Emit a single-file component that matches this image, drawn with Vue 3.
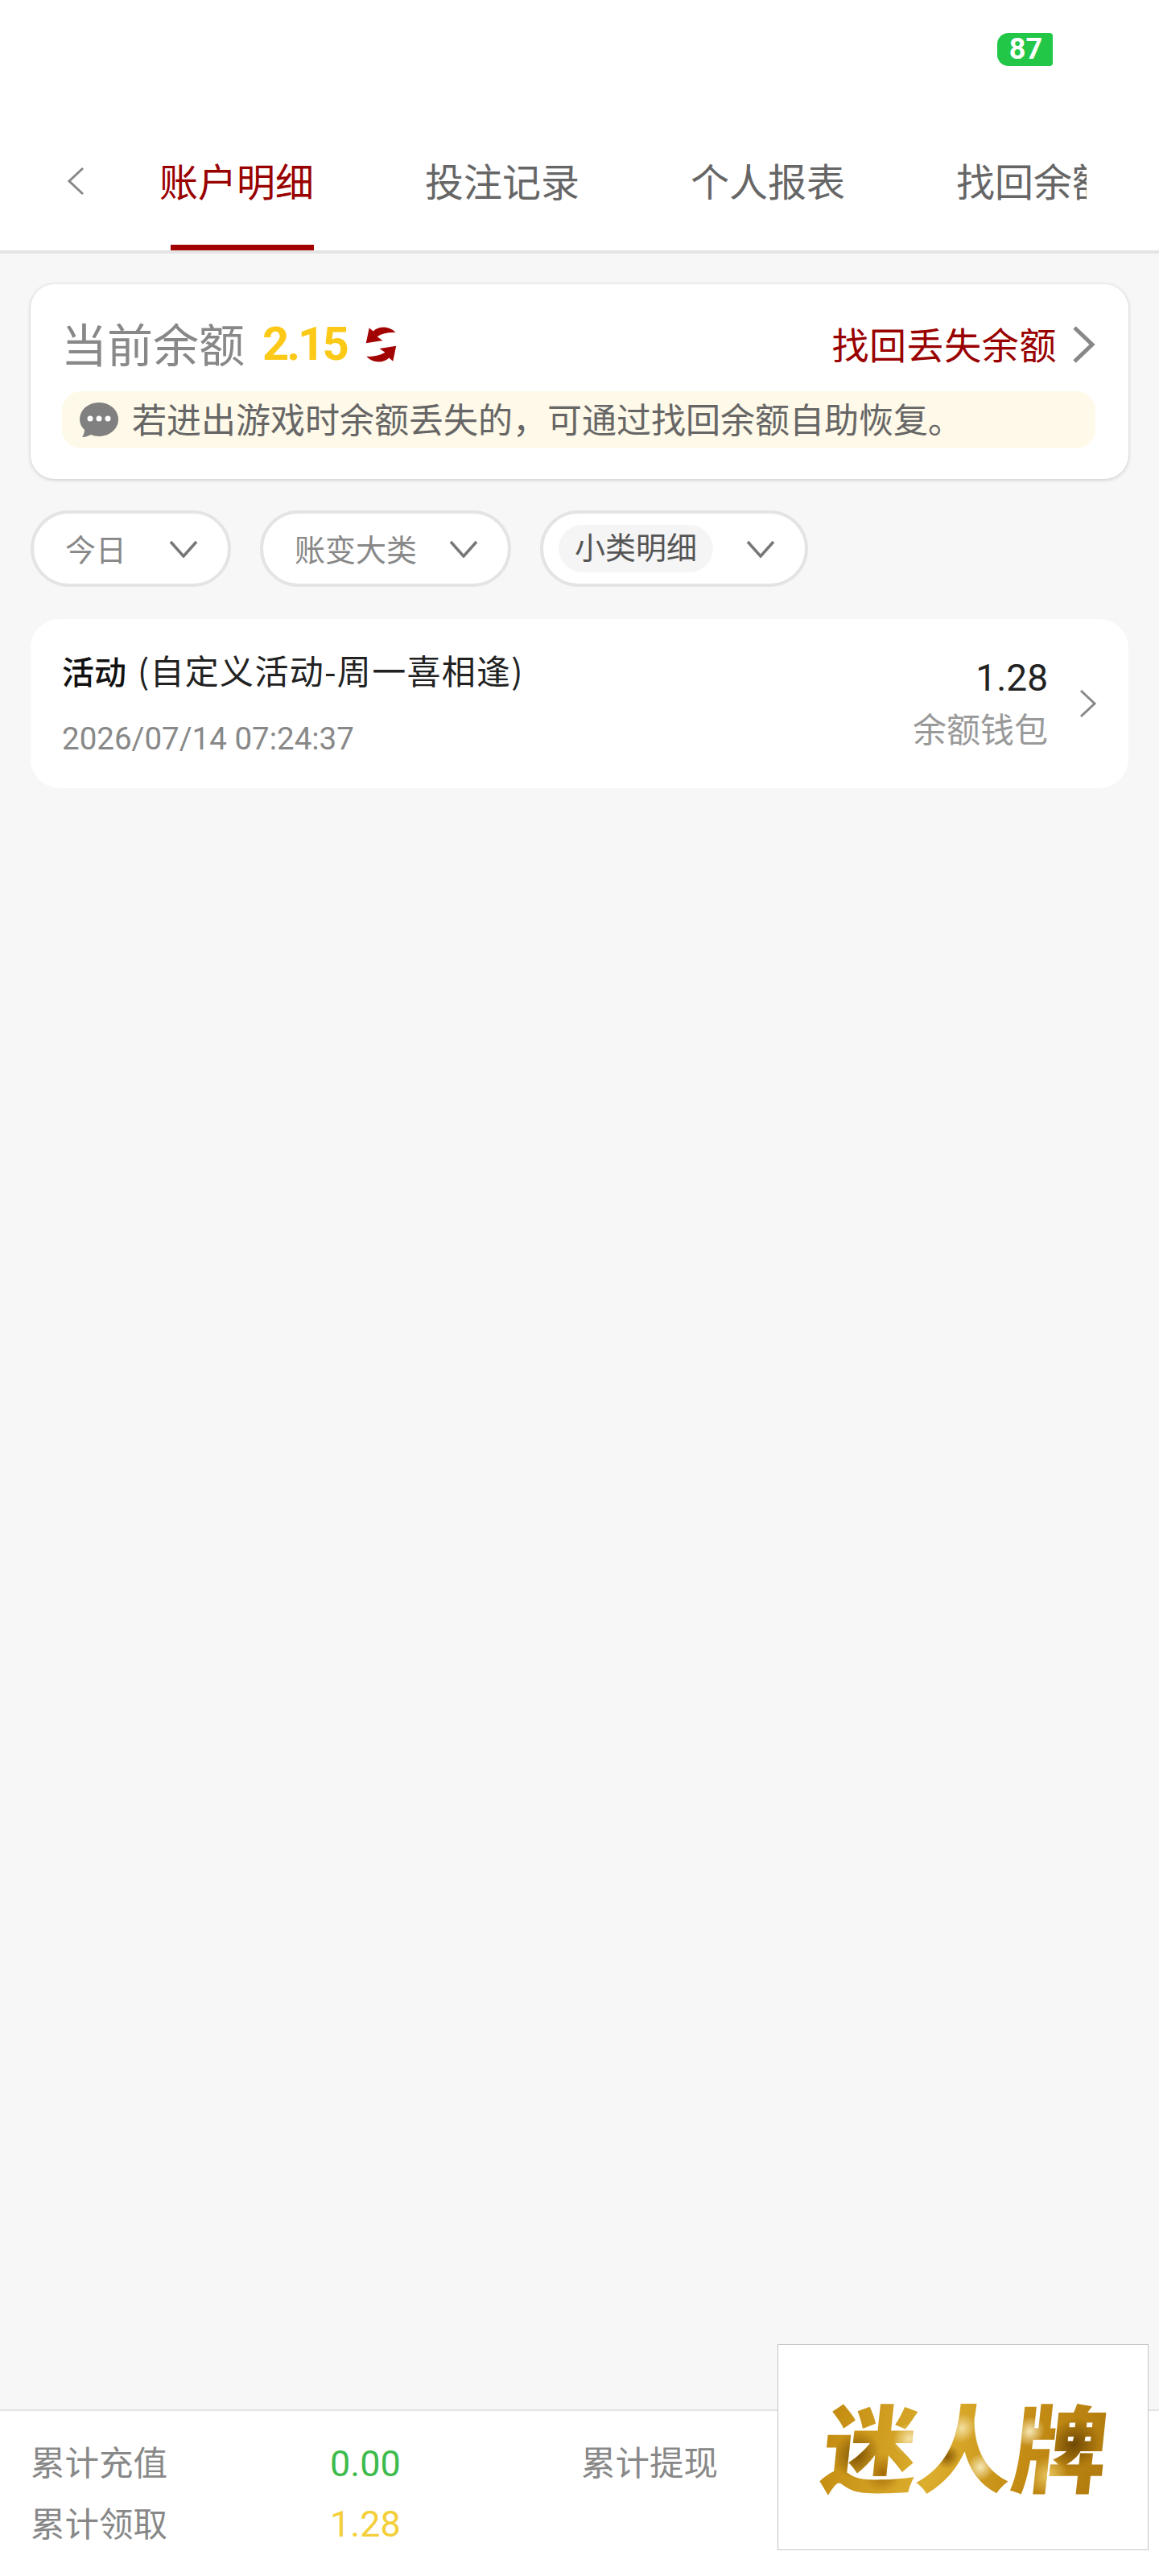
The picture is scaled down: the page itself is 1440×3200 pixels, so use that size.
<script setup>
const tabs = ['账户明细', '投注记录', '个人报表', '找回余额']
const filters = [
  { label: '今日', cls: 'f-day' },
  { label: '账变大类', cls: 'f-type' },
  { label: '小类明细', cls: 'f-sub', chip: true },
]
</script>

<template>
  <div class="page">
    <header class="top">
      <div class="status">
        <span class="battery">87</span>
      </div>
      <nav class="tabbar">
        <svg class="back" viewBox="0 0 24 36" width="24" height="36">
          <path d="M21 2 L4 18 L21 34" fill="none" stroke="#888" stroke-width="3" />
        </svg>
        <div class="tabs">
          <span v-for="(t, i) in tabs" :key="t" class="tab" :class="{ active: i === 0 }">{{ t }}</span>
        </div>
      </nav>
    </header>

    <main class="content">
      <section class="balance">
        <div class="balance-row">
          <div class="balance-left">
            <span class="balance-label">当前余额</span>
            <span class="balance-num">2.15</span>
            <svg class="refresh" viewBox="160 78 120 134" width="41" height="44">
              <path fill="#a30202" d="M175 82 L163 140 L226 130 L205 115 C225 103 250 98 275 100 C255 76 212 72 190 95 Z" />
              <path fill="#a30202" d="M265 208 L277 150 L214 160 L235 175 C215 187 190 192 165 190 C185 214 228 218 250 195 Z" />
            </svg>
          </div>
          <a class="recover">
            <span class="recover-text">找回丢失余额</span>
            <svg viewBox="0 0 30 48" width="30" height="48">
              <path d="M4 3 L26 24 L4 45" fill="none" stroke="#888" stroke-width="5" />
            </svg>
          </a>
        </div>
        <div class="notice">
          <svg class="notice-icon" viewBox="0 0 48 43" width="48" height="43">
            <path fill="#808080" d="M24 0 C37 0 48 9 48 21 C48 33 37 42 24 42 C20 42 17 41 14 40 C11 41 8 43 3 43 C5 40 6 37 6 34 C2 30 0 26 0 21 C0 9 11 0 24 0 Z" />
            <circle cx="13" cy="20" r="3.5" fill="#fff" />
            <circle cx="24" cy="20" r="3.5" fill="#fff" />
            <circle cx="35" cy="20" r="3.5" fill="#fff" />
          </svg>
          <span class="notice-text">若进出游戏时余额丢失的，可通过找回余额自助恢复。</span>
        </div>
      </section>

      <div class="filters">
        <div v-for="f in filters" :key="f.label" class="filter" :class="f.cls">
          <span class="filter-text" :class="{ chip: f.chip }">{{ f.label }}</span>
          <svg viewBox="0 0 36 22" width="36" height="22">
            <path d="M2 2 L18 20 L34 2" fill="none" stroke="#777" stroke-width="3.5" />
          </svg>
        </div>
      </div>

      <article class="record">
        <div class="record-main">
          <div class="record-title"><b>活动</b><span class="record-sub">(自定义活动-周一喜相逢)</span></div>
          <div class="record-date">2026/07/14 07:24:37</div>
        </div>
        <div class="record-side">
          <div class="record-amount">1.28</div>
          <div class="record-wallet">余额钱包</div>
        </div>
        <svg class="record-arrow" viewBox="0 0 24 36" width="24" height="36">
          <path d="M3 2 L20 18 L3 34" fill="none" stroke="#888" stroke-width="3" />
        </svg>
      </article>
    </main>

    <footer class="totals">
      <span class="t-label">累计充值</span>
      <span class="t-val green">0.00</span>
      <span class="t-label">累计提现</span>
      <span class="t-label">累计领取</span>
      <span class="t-val yellow">1.28</span>
    </footer>

    <div class="promo">
      <span class="promo-logo">迷人牌</span>
    </div>
  </div>
</template>

<style scoped>
.page {
  position: relative;
  display: flex;
  flex-direction: column;
  width: 1440px;
  height: 3200px;
  overflow: hidden;
  background: #f7f7f7;
  font-family: Roboto, "Noto Sans CJK SC", sans-serif;
}
.top {
  height: 315px;
  box-sizing: border-box;
  background: #fff;
  border-bottom: 4px solid #e4e4e4;
}
.status {
  display: flex;
  justify-content: flex-end;
  height: 190px;
  box-sizing: border-box;
  padding: 41px 132px 0 0;
}
.battery {
  width: 69px;
  height: 41px;
  padding-left: 2px;
  box-sizing: border-box;
  border-radius: 14px 4px 4px 14px;
  background: #22c747;
  color: #fff;
  font-size: 36px;
  font-weight: 700;
  line-height: 41px;
  text-align: center;
}
.tabbar {
  display: flex;
  align-items: flex-start;
  height: 121px;
  padding-left: 82px;
}
.back {
  flex: none;
  margin-top: 17px;
}
.tabs {
  display: flex;
  gap: 138px;
  width: 1152px;
  height: 100%;
  margin-left: 92px;
  overflow: hidden;
}
.tab {
  position: relative;
  flex: none;
  width: 192px;
  color: #666;
  font-size: 48px;
  line-height: 76px;
}
.tab.active {
  color: #990000;
}
.tab.active::after {
  content: '';
  position: absolute;
  left: 14px;
  right: 0;
  bottom: 0;
  height: 7px;
  background: #a30202;
}
.content {
  display: flex;
  flex-direction: column;
  gap: 39px;
  padding: 38px 38px 0;
}
.balance {
  height: 242px;
  box-sizing: border-box;
  padding: 38px 41px 0 39px;
  background: #fff;
  border-radius: 30px;
  box-shadow: 0 1px 5px rgba(0, 0, 0, 0.2);
}
.balance-row {
  display: flex;
  align-items: center;
  justify-content: space-between;
  height: 74px;
}
.balance-left {
  display: flex;
  align-items: center;
}
.balance-label {
  margin: -6px 0 0 -1px;
  color: #888;
  font-size: 57px;
}
.balance-num {
  margin: -2px 0 0 22px;
  color: #fbc916;
  font-size: 58px;
  font-weight: 700;
  letter-spacing: -3px;
}
.refresh {
  margin-left: 22px;
}
.recover {
  display: flex;
  align-items: center;
  gap: 18px;
  color: #990000;
  font-size: 46px;
}
.recover-text {
  margin-top: -5px;
  letter-spacing: 0.6px;
}
.notice {
  display: flex;
  align-items: center;
  gap: 17px;
  height: 71px;
  margin-top: 21px;
  padding-left: 22px;
  background: #fef9e8;
  border-radius: 24px;
  color: #666;
  font-size: 43px;
}
.notice-text {
  margin-top: -6px;
}
.filters {
  display: flex;
  gap: 36px;
  margin-bottom: 1px;
}
.filter {
  display: flex;
  align-items: center;
  justify-content: space-between;
  height: 95px;
  box-sizing: border-box;
  padding: 0 37px 0 39px;
  background: #fff;
  border: 4px solid #e4e4e4;
  border-radius: 48px;
}
.f-day {
  width: 249px;
}
.f-type {
  width: 312px;
}
.f-sub {
  width: 333px;
  padding-left: 19px;
}
.filter-text {
  margin-top: -3px;
  color: #888;
  font-size: 38px;
}
.filter-text.chip {
  margin-top: 0;
  padding: 0 20px;
  background: #f5f5f5;
  border-radius: 30px;
  color: #555;
  line-height: 59px;
}
.record {
  display: flex;
  align-items: center;
  height: 210px;
  box-sizing: border-box;
  padding: 0 38px 0 39px;
  background: #fff;
  border-radius: 36px;
}
.record-main {
  flex: 1;
}
.record-title {
  color: #222;
  font-size: 40px;
  line-height: 48px;
}
.record-title b {
  color: #111;
  font-weight: 500;
}
.record-sub {
  margin-left: 14px;
  font-family: "Noto Sans CJK SC", sans-serif;
  font-size: 42px;
  letter-spacing: 1.3px;
}
.record-date {
  margin-top: 34px;
  color: #888;
  font-size: 38.5px;
  line-height: 46px;
}
.record-side {
  text-align: right;
}
.record-amount {
  color: #222;
  font-size: 46px;
  line-height: 54px;
}
.record-wallet {
  margin-top: 14px;
  color: #999;
  font-size: 42px;
  line-height: 50px;
}
.record-arrow {
  margin-left: 38px;
}
.totals {
  display: grid;
  grid-template-columns: 372px 312px auto;
  grid-auto-rows: 76px;
  align-items: center;
  height: 207px;
  box-sizing: border-box;
  margin-top: auto;
  padding: 27px 0 0 38px;
  background: #fff;
  border-top: 2px solid #e4e4e4;
}
.t-label {
  margin-top: -7px;
  color: #888;
  font-size: 42.5px;
}
.t-val {
  font-size: 45px;
}
.green {
  color: #3dbb4c;
}
.yellow {
  margin-top: -2px;
  color: #f3cf3a;
}
.promo {
  position: absolute;
  left: 966px;
  top: 2912px;
  display: flex;
  align-items: center;
  justify-content: center;
  width: 461px;
  height: 256px;
  box-sizing: border-box;
  background: #fff;
  border: 1px solid #c4c4c4;
}
.promo-logo {
  display: block;
  margin: -8px 0 0 8px;
  transform: skewX(-6deg);
  font-family: "Noto Sans CJK SC", sans-serif;
  font-size: 118px;
  font-weight: 900;
  line-height: 130px;
  color: transparent;
  background:
    radial-gradient(circle at 12% 60%, #7d5206 0, rgba(125, 82, 6, 0) 9%),
    radial-gradient(circle at 30% 45%, #f5e2a6 0, rgba(245, 226, 166, 0) 8%),
    radial-gradient(circle at 22% 78%, #a56c08 0, rgba(165, 108, 8, 0) 8%),
    radial-gradient(circle at 48% 35%, #f3dfa0 0, rgba(243, 223, 160, 0) 9%),
    radial-gradient(circle at 56% 72%, #f6e7b5 0, rgba(246, 231, 181, 0) 8%),
    radial-gradient(circle at 44% 62%, #8a5a08 0, rgba(138, 90, 8, 0) 7%),
    radial-gradient(circle at 72% 38%, #f6e7b5 0, rgba(246, 231, 181, 0) 7%),
    radial-gradient(circle at 88% 50%, #6f4804 0, rgba(111, 72, 4, 0) 10%),
    radial-gradient(circle at 80% 80%, #e8c560 0, rgba(232, 197, 96, 0) 8%),
    linear-gradient(100deg, #c28a10, #dcae2e 40%, #c48c14 70%, #b07a0e);
  -webkit-background-clip: text;
  background-clip: text;
}
</style>
